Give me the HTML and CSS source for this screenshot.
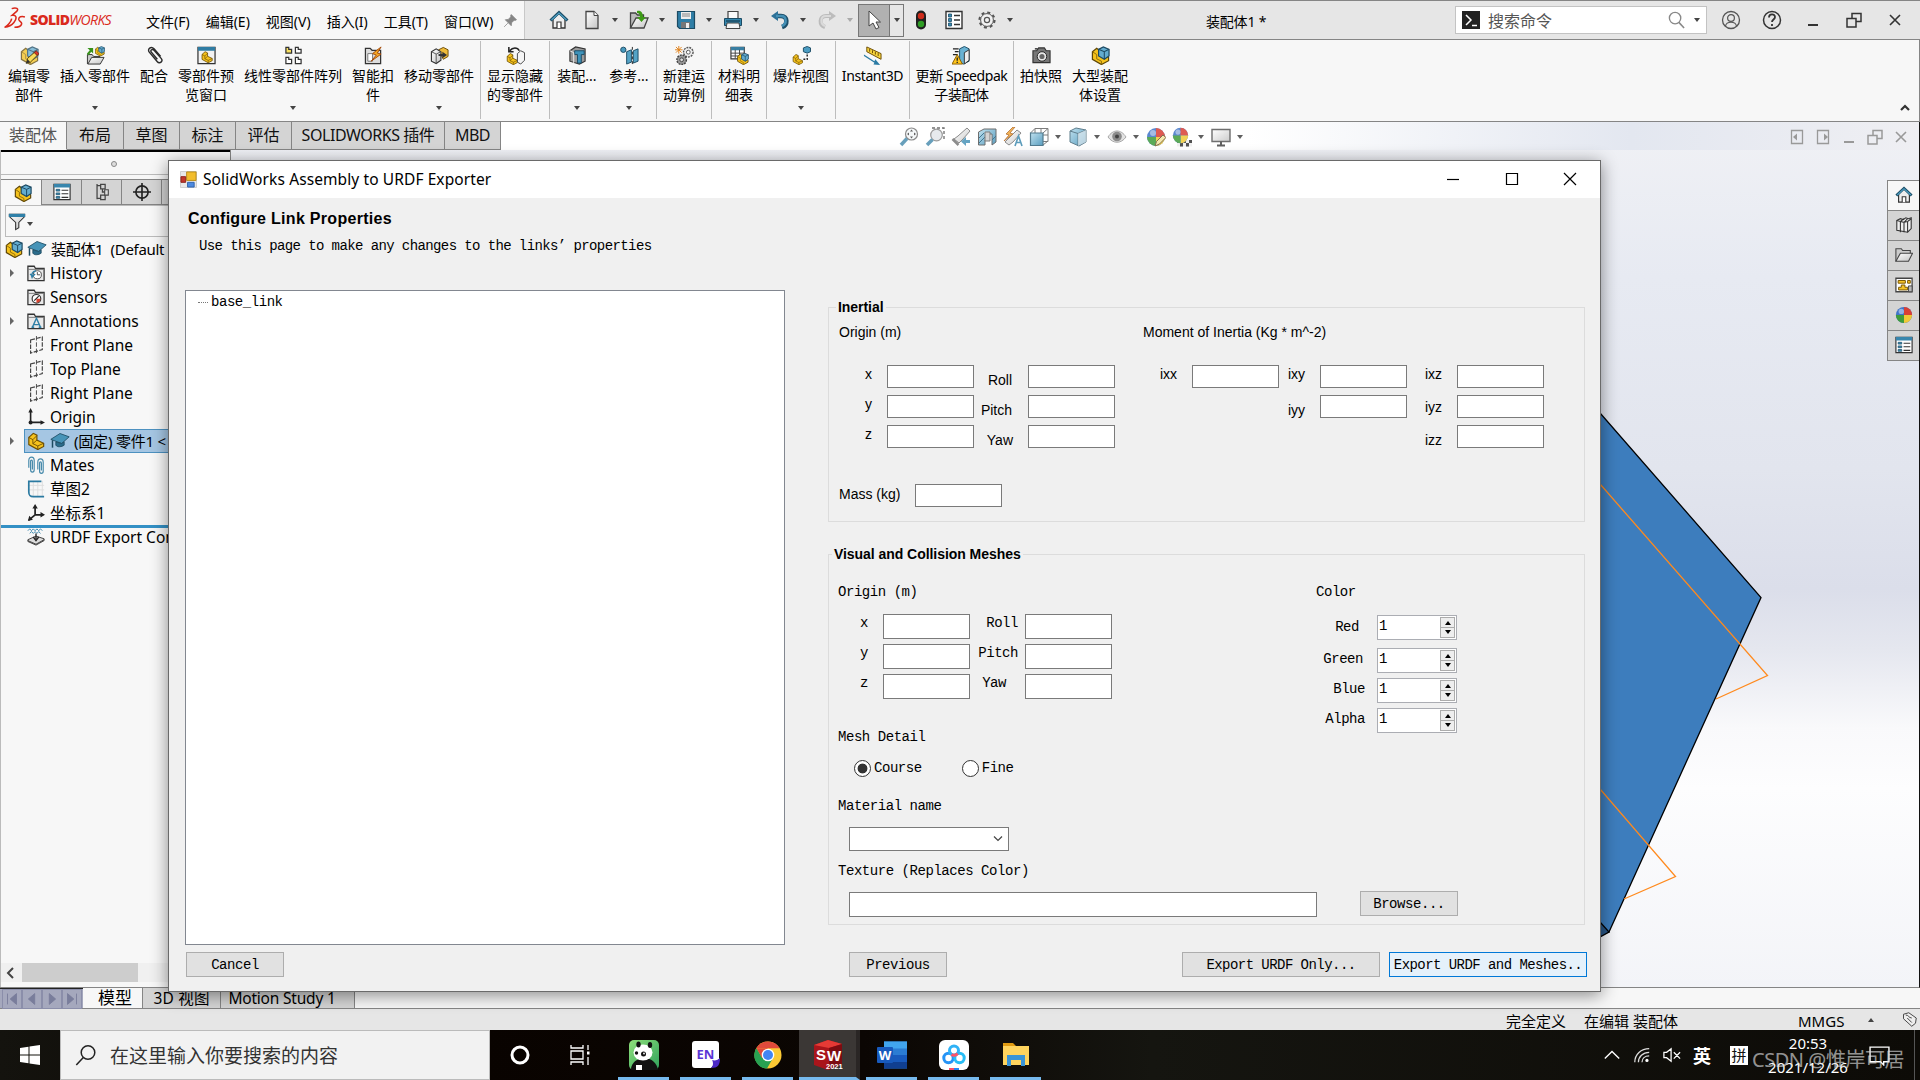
FILE: index.html
```html
<!DOCTYPE html>
<html lang="zh-CN">
<head>
    <meta charset="UTF-8">
    <meta name="viewport" content="width=device-width, initial-scale=1.0">
    <title>SOLIDWORKS - 装配体1</title>
    <link rel="stylesheet" href="styles.css">
</head>
<body>
    <!-- icon sprite -->
    <svg class="sprite" aria-hidden="true">
        <defs>
            <linearGradient id="paper" x1="0" y1="0" x2="1" y2="1"><stop offset="0" stop-color="#fff"/><stop offset="1" stop-color="#c4c4c4"/></linearGradient>
            <linearGradient id="sky" x1="0" y1="0" x2="1" y2="1"><stop offset="0" stop-color="#b5dcec"/><stop offset="1" stop-color="#3d8db5"/></linearGradient>
            <linearGradient id="panda-bg" x1="0" y1="0" x2="1" y2="1"><stop offset="0" stop-color="#8fe07a"/><stop offset="1" stop-color="#2fa15c"/></linearGradient>
        </defs>
        <symbol id="home" viewBox="0 0 20 20"><path d="M4 9v9h12V9l-6-6z" fill="#eee" stroke="#333" stroke-width="1.3"/><path d="M8 18v-6h4v6" fill="#fff" stroke="#333" stroke-width="1.2"/><path d="M1.5 10.5 10 2.5l8.500 8" fill="none" stroke="#1d4f68" stroke-width="3"/><path d="M2.500 10 10 3l7.500 7" fill="none" stroke="#4fa0c4" stroke-width="1.200"/></symbol>
        <symbol id="new" viewBox="0 0 20 20"><path d="M4 1.500h8l4 4v13H4z" fill="url(#paper)" stroke="#444" stroke-width="1.300"/><path d="M12 1.500v4h4" fill="#fff" stroke="#444"/></symbol>
        <symbol id="open" viewBox="0 0 20 20"><path d="M1.500 18V3h5l2 2h6v3" fill="#bbb" stroke="#444" stroke-width="1.300"/><path d="M1.500 18 7 8h12l-4 10z" fill="url(#paper)" stroke="#444" stroke-width="1.300"/><path d="M8 1c4-1 6 2 6 6h3l-4.500 5L8 7h3c0-2-1-4-3-4z" fill="#3d9a16"/></symbol>
        <symbol id="save" viewBox="0 0 20 20"><path d="M1.500 1.500h17v17h-15l-2-2z" fill="#2f7ea6" stroke="#1c4b63" stroke-width="1.200"/><path d="M5 2h10v7H5z" fill="#eee"/><path d="M6 4h8M6 6h8" stroke="#888"/><path d="M5 12h9v6H5z" fill="#777"/><path d="M10 13h3v5h-3z" fill="#eee"/></symbol>
        <symbol id="print" viewBox="0 0 20 20"><path d="M5 1.500h10V9H5z" fill="#fafafa" stroke="#444" stroke-width="1.200"/><path d="M1.500 8.500h17v7h-17z" fill="#3487ae" stroke="#1b4a62"/><path d="M4 13h12l1 5.500H3z" fill="#f5f5f5" stroke="#444"/><path d="M3 11h14" stroke="#1b4a62" stroke-width="1.500"/></symbol>
        <symbol id="undo" viewBox="0 0 20 20"><path d="M5 6h6c7 0 7 9 1 11" fill="none" stroke="#1c4e69" stroke-width="4.500"/><path d="M8 1v10L1 6z" fill="#2c7198"/><path d="M6 6h5c6 0 6 8 1 10" fill="none" stroke="#438fb5" stroke-width="2.500"/></symbol>
        <symbol id="redo" viewBox="0 0 20 20"><path d="M15 6H9c-7 0-7 9-1 11" fill="none" stroke="#bcbcbc" stroke-width="4"/><path d="M12 1v10l7-5z" fill="#bcbcbc"/><path d="M14 6H9c-6 0-6 8-1 10" fill="none" stroke="#dadada" stroke-width="2"/></symbol>
        <symbol id="cursor" viewBox="0 0 20 20"><path d="M5 1v15l4-3 3 6 3-1.500-3-5.500h4.500z" fill="#fff" stroke="#444"/></symbol>
        <symbol id="traffic" viewBox="0 0 20 20"><rect x="5" y="0.500" width="10" height="19" rx="5" fill="#202020"/><circle cx="10" cy="6" r="3.200" fill="#cf2d1c"/><circle cx="10" cy="14" r="3.200" fill="#2f9e25"/></symbol>
        <symbol id="list" viewBox="0 0 20 20"><path d="M2 1.500h16v17H2z" fill="#fff" stroke="#333" stroke-width="1.400"/><path d="M4.500 4h3v3h-3zM4.500 8.500h3v3h-3zM4.500 13h3v3h-3z" fill="#3b8bb1" stroke="#1c4e69" stroke-width=".8"/><path d="M10 5.500h6M10 10h6M10 14.500h6" stroke="#333" stroke-width="1.300"/></symbol>
        <symbol id="gear" viewBox="0 0 20 20"><circle cx="10" cy="10" r="7.500" fill="none" stroke="#555" stroke-width="2.200" stroke-dasharray="3 2.890"/><circle cx="10" cy="10" r="6.400" fill="#f2f2f2" stroke="#555"/><circle cx="10" cy="10" r="2.600" fill="none" stroke="#555" stroke-width="1.200"/></symbol>
        <symbol id="pin" viewBox="0 0 20 20"><path d="M11 2 18 9 16 10 15 9.500 11.500 13 11 17 3 9 7 8.500 10.500 5 10 4zM6.500 13.500 1.500 18.500" fill="#858585" stroke="#858585"/></symbol>

        <symbol id="part" viewBox="0 0 20 20"><path d="M2 6 7 1.500l4 2v5.500l7.500 3.500V16L12 19.500 2 14z" fill="#f5c21c" stroke="#6d4f04" stroke-width="1.300"/><path d="m2 6 4.500 2.500V13l5.500 2.500v4M6.500 8.500 11 4M12 15.500l6.500-3M6.500 13l4.500-4" fill="none" stroke="#6d4f04"/></symbol>
        <symbol id="assembly" viewBox="0 0 20 20"><path d="M1.500 6 6 2.500l4 3 8.500 6.500v3.500L11 19.500 1.500 14z" fill="#f5c21c" stroke="#5e4606" stroke-width="1.300"/><path d="M1.500 6 6 9v4.500l5 2.500v3.500" fill="none" stroke="#8c6a08"/><path d="m8 3.500 5-2.500L19 3.500v7l-5 3.500-6-3.500z" fill="#63acd0" stroke="#1d4a63" stroke-width="1.300"/><path d="m8 3.500 6 2.500 5-2.500M14 6v8" fill="none" stroke="#1d4a63" stroke-width="1.100"/></symbol>
        <symbol id="edit-part" viewBox="0 0 20 20"><use href="#assembly" opacity=".75"/><path d="M7 18 8 13l8-7 3 3-8 8z" fill="#f7dc5b" stroke="#5b4105"/><path d="m15 7 2-2 3 3-2 2z" fill="#d8382a" stroke="#661b14" stroke-width=".8"/><path d="m6 19 2-5 2.500 2.500z" fill="#333"/></symbol>
        <symbol id="insert-part" viewBox="0 0 20 20"><path d="M1.500 19V9h5l1.500 2h7" fill="#c8c8c8" stroke="#333"/><path d="M2 19 6 12h13l-4 7z" fill="url(#paper)" stroke="#333"/><path d="M1.500 2h6v6l-2-2-3 4L1 8l3-3.500z" fill="#37921a"/><svg x="9" y="0" width="11" height="11"><use href="#assembly"/></svg></symbol>
        <symbol id="clip" viewBox="0 0 20 20"><path d="m16.500 11-7-8C6.500 0 2 3 4.500 6.500l8.500 10c2.500 3 6.500-.5 4-3.500L9.500 4.500c-1.800-2-4.300 0-2.800 2L13 14" fill="none" stroke="#2b2b2b" stroke-width="1.500"/></symbol>
        <symbol id="preview" viewBox="0 0 20 20"><path d="M1 1.500h18v17H1z" fill="#f2f2f2" stroke="#333" stroke-width="1.300"/><path d="M1 1h18v4H1z" fill="#2f7ca3"/><svg x="4" y="5" width="13" height="13"><use href="#part"/></svg></symbol>
        <symbol id="pattern" viewBox="0 0 20 20"><path d="M2 1.500h3v2h3v4H2z" fill="#f8e060" stroke="#333" stroke-width="1.300"/><path d="M12 1.500h3v2h3v4h-6zM2 12h3v2h3v4.500H2zM12 12h3v2h3v4.500h-6z" fill="#fff" stroke="#333" stroke-width="1.300"/></symbol>
        <symbol id="smart" viewBox="0 0 20 20"><path d="M1.500 2.500h5l2 2h9v14h-16z" fill="#ddd" stroke="#333" stroke-width="1.300"/><path d="M4 8h5v8H4z" fill="#fff" stroke="#777"/><path d="m18 1-9 7 4 1.500L7.500 16 18 8.500l-4-1z" fill="#f6a823" stroke="#a34a0b"/></symbol>
        <symbol id="move" viewBox="0 0 20 20"><path d="m9 4 5-2.500L19 4v7l-5 3z" fill="#efbb39" stroke="#6b4c05"/><path d="m1.500 6 5-3 5 3v9l-5 3.500-5-2.500z" fill="url(#paper)" stroke="#333" stroke-width="1.200"/><path d="m1.500 6 5 2.500L11.500 6M6.500 8.500v10" fill="none" stroke="#555"/><path d="M9 9.500h5" stroke="#333" stroke-width="2"/><path d="m13 6 5 3.500-5 3.500z" fill="#333"/></symbol>
        <symbol id="show-hide" viewBox="0 0 20 20"><path d="M4 5c3-4 8-4 10 0M3 1v5h5" fill="none" stroke="#222" stroke-width="1.600"/><svg x="0" y="7" width="13" height="13"><use href="#part"/></svg><path d="m12 8 3.500-3 4 2v8l-4 4-3.500-2z" fill="#f5f5f5" stroke="#444"/></symbol>
        <symbol id="feature" viewBox="0 0 20 20"><path d="m2 5 6-4 10 2v13l-6 3L2 16z" fill="#9a9a9a" stroke="#333" stroke-width="1.200"/><path d="M7 5h10v4h-3v9h-4V9H7z" fill="#3f93ba" stroke="#1b4c65"/><path d="M2 5 6 7v11" stroke="#eee" fill="none"/></symbol>
        <symbol id="ref" viewBox="0 0 20 20"><circle cx="3.500" cy="4" r="2.800" fill="#4899be" stroke="#1b4c65"/><path d="m7 6 5-2v13l-5 2zM14 5l5-2v13l-5 2z" fill="#55a3c6" stroke="#1b4c65"/><path d="M13 1v19" stroke="#222" stroke-dasharray="3 2"/></symbol>
        <symbol id="motion" viewBox="0 0 20 20"><circle cx="14" cy="6.500" r="5" fill="#eee" stroke="#555" stroke-width="1.500" stroke-dasharray="2 1"/><circle cx="14" cy="6.500" r="2" fill="#fff" stroke="#555"/><circle cx="7" cy="14.500" r="5" fill="#999" stroke="#444" stroke-width="1.500" stroke-dasharray="2 1"/><circle cx="7" cy="14.500" r="2" fill="#ddd" stroke="#444"/><path d="M4 0v8M0 4h8M1 1l6 6M7 1 1 7" stroke="#e08118"/></symbol>
        <symbol id="bom" viewBox="0 0 20 20"><path d="M1 1.500h14v12H1z" fill="#fff" stroke="#333" stroke-width="1.200"/><path d="M1 1h14v3.500H1z" fill="#397fa3"/><path d="M1 7.500h14M1 10.500h14M5.500 4v9M10 4v9" stroke="#444"/><svg x="7" y="7" width="13" height="13"><use href="#assembly"/></svg></symbol>
        <symbol id="explode" viewBox="0 0 20 20"><svg x="0" y="8" width="12" height="12"><use href="#part"/></svg><path d="m12 2 4-1.500L19.500 2v4L16 7.500 12 6z" fill="#4b9cc2" stroke="#1b4c65"/><path d="M16 9v5h-5" fill="none" stroke="#222" stroke-width="1.500" stroke-dasharray="2 1.500"/></symbol>
        <symbol id="instant" viewBox="0 0 20 20"><path d="M4 1 19 8v6L4 6z" fill="#f6d33b" stroke="#6b4c05"/><path d="M7 3v3M10 4.500v3M13 6v3M16 7.500v3" stroke="#6b4c05"/><path d="m1 9 11 7 1-2 5 6-7-.5 1-2L1 10.500z" fill="#2b7ba4"/></symbol>
        <symbol id="speedpak" viewBox="0 0 20 20"><path d="m8 3 5-2.500L18 3v13l-6 3-4-2z" fill="#69b2d3" stroke="#1b4c65"/><path d="m13 7 5-3v11l-5 4z" fill="#eee" stroke="#333"/><path d="M1 3h6M3 6h4M1 9h5" stroke="#222" stroke-width="1.300"/><path d="m5.500 9 5.500 10H0z" fill="#ffc51b" stroke="#8a5d00"/><path d="M5.500 12v3.500M5.500 16.500V18" stroke="#222" stroke-width="1.400"/></symbol>
        <symbol id="camera" viewBox="0 0 20 20"><path d="M1 5h4l2-3h6l2 3h4v12.500H1z" fill="#777" stroke="#333" stroke-width="1.200"/><circle cx="10.500" cy="11" r="5" fill="#e8e8e8" stroke="#222"/><circle cx="10.500" cy="11" r="2.700" fill="#666"/><path d="M3 3h3" stroke="#333" stroke-width="1.500"/></symbol>

        <symbol id="zoomfit" viewBox="0 0 20 20"><circle cx="12.500" cy="7" r="6" fill="#f4f7f9" stroke="#777" stroke-width="1.200"/><path d="M8 11.500 2 18" stroke="#4d8fb0" stroke-width="3.500"/><path d="m12.500 2.500 1.500 2h-3zM12.500 11.500l1.500-2h-3zM8 7l2-1.500v3zM17 7l-2-1.500v3z" fill="#444"/></symbol>
        <symbol id="zoomarea" viewBox="0 0 20 20"><path d="M7 1h12v12" fill="none" stroke="#555" stroke-width="1.300" stroke-dasharray="3 2"/><circle cx="11.500" cy="8" r="5.800" fill="#e3e7ea" stroke="#888" stroke-width="1.200"/><path d="M7.500 12.500 2 18" stroke="#4d8fb0" stroke-width="3.500"/></symbol>
        <symbol id="prevview" viewBox="0 0 20 20"><path d="m3 12 4-3 9-8 3 3-7 8-4 4z" fill="url(#paper)" stroke="#777"/><path d="m1.500 12 6 6" stroke="#777" stroke-width="2.500"/><path d="M19 13v3h-4v3l-5-4.500 5-4.500v3z" fill="#4a94b8"/></symbol>
        <symbol id="section" viewBox="0 0 20 20"><path d="M1.500 5 7 2h12v13l-4 3V7h-3v6H8v5H1.500z" fill="url(#sky)" stroke="#555"/><path d="m2 11 5-5M2 16l6-6M15 13l4-4" stroke="#22607f"/><path d="M8 5h5v9H8z" fill="#ccc" stroke="#666"/></symbol>
        <symbol id="dynview" viewBox="0 0 20 20"><path d="m2 15 12-12 4 3-8 9-4 3z" fill="url(#paper)" stroke="#777"/><path d="m10 0-7 7 3 1-5 6 9-7-3-1 5-6z" fill="#f3a73a" stroke="#a45a18" stroke-width=".8"/><path d="m12 19 3.500-10L19 19M13 15.500h5" fill="none" stroke="#3f8bb0" stroke-width="1.600"/></symbol>
        <symbol id="orient" viewBox="0 0 20 20"><path d="M6 1.500h13v13M6 1.500v13h13M1.500 6 6 1.500M14 6l5-4.500M14 18l5-4M12 1v13M6 8h13" fill="none" stroke="#666"/><path d="M1.500 6H14v12.500H1.500z" fill="url(#sky)" stroke="#35657c" stroke-width="1.200"/></symbol>
        <symbol id="display" viewBox="0 0 20 20"><path d="m2 4 6-3 10 2v12l-7 4-9-4z" fill="url(#sky)" stroke="#44687a"/><path d="m2 4 8 2.500L18 3M10 6.500V19" fill="none" stroke="#44687a"/><path d="m10 6.500 8-3.500v12l-8 4z" fill="#eef2f4" opacity=".6"/></symbol>
        <symbol id="eye" viewBox="0 0 20 20"><path d="M1 10c5-8 13-8 18 0-5 7-13 7-18 0z" fill="#ddd" stroke="#999"/><circle cx="10" cy="9.500" r="4.800" fill="#777"/><circle cx="10" cy="9.500" r="2" fill="#222"/></symbol>
        <symbol id="ball" viewBox="0 0 20 20"><circle cx="10" cy="10" r="9" fill="#3f74c8"/><path d="M10 1a9 9 0 0 1 9 9h-9z" fill="#d93f35"/><path d="M10 10h9a9 9 0 0 1-9 9z" fill="#f0c937"/><path d="M1 10h9v9a9 9 0 0 1-9-9z" fill="#3f9c3a"/><circle cx="7" cy="6" r="3" fill="#fff" opacity=".45"/></symbol>
        <symbol id="appearance" viewBox="0 0 20 20"><use href="#ball"/><path d="m9 19 1.500-4.500L17 8l3 2.500-6.500 6.500z" fill="#f4e4a0" stroke="#6b5632"/></symbol>
        <symbol id="scene" viewBox="0 0 20 20"><path d="M5 13h15v6.500H5z" fill="#eee"/><path d="M5 13h3v3H5zM11 13h3v3h-3zM17 13h3v3h-3zM8 16h3v3.500H8zM14 16h3v3.500h-3z" fill="#333"/><svg x="0" y="0" width="17" height="17"><use href="#ball"/></svg></symbol>
        <symbol id="monitor" viewBox="0 0 20 20"><path d="M1 2.500h18v12H1z" fill="url(#paper)" stroke="#555" stroke-width="1.400"/><path d="M10 14.500V18M6 18.500h8" stroke="#444" stroke-width="2"/></symbol>

        <symbol id="minimize" viewBox="0 0 20 20"><path d="M5 15h10" stroke="currentColor" stroke-width="2"/></symbol>
        <symbol id="restore" viewBox="0 0 20 20"><path d="M3 8.500h9V17H3zM8 8V3.500h9v8h-5" fill="none" stroke="currentColor" stroke-width="1.500"/></symbol>
        <symbol id="close" viewBox="0 0 20 20"><path d="m5 5 10 10M15 5 5 15" stroke="currentColor" stroke-width="1.600"/></symbol>
        <symbol id="pane-left" viewBox="0 0 20 20"><path d="M4.500 3.500h11v13h-11z" fill="none" stroke="currentColor" stroke-width="1.300"/><path d="M10 6.500v7L6 10z" fill="currentColor"/></symbol>
        <symbol id="pane-right" viewBox="0 0 20 20"><path d="M4.500 3.500h11v13h-11z" fill="none" stroke="currentColor" stroke-width="1.300"/><path d="M11 6.500v7l4-3.500z" fill="currentColor"/></symbol>
        <symbol id="search" viewBox="0 0 20 20"><circle cx="8.500" cy="8" r="6" fill="none" stroke="currentColor" stroke-width="1.400"/><path d="m12.500 12.500 5.500 6" stroke="currentColor" stroke-width="1.600"/></symbol>
        <symbol id="user" viewBox="0 0 20 20"><circle cx="10" cy="10" r="8.500" fill="none" stroke="#555" stroke-width="1.300"/><circle cx="10" cy="8" r="3.400" fill="none" stroke="#555" stroke-width="1.200"/><path d="M4.500 16c1-5 10-5 11 0" fill="none" stroke="#555" stroke-width="1.200"/></symbol>
        <symbol id="help" viewBox="0 0 20 20"><circle cx="10" cy="10" r="8.500" fill="none" stroke="#333" stroke-width="1.500"/><path d="M7 7.500c0-4 6-4 6-.5 0 2.500-3 2.500-3 5M10 14v2" fill="none" stroke="#333" stroke-width="1.800"/></symbol>

        <symbol id="props" viewBox="0 0 20 20"><path d="M1 1.500h18v17H1z" fill="#fff" stroke="#333" stroke-width="1.300"/><path d="M1 1h18v4H1z" fill="#3886ad"/><path d="M3.500 7h4v2h-4zM3.500 11h4v2h-4zM3.500 15h4v2h-4z" fill="#3b8bb1" stroke="#1c4e69" stroke-width=".8"/><path d="M9.500 8H17M9.500 12H17M9.500 16H17" stroke="#333" stroke-width="1.200"/></symbol>
        <symbol id="config" viewBox="0 0 20 20"><path d="M4.500 1v17M4.500 3h4M4.500 17h4M8.500 1.500h5v5h-5zM8.500 13.500h5v5h-5zM10.500 7v3h3" fill="none" stroke="#444" stroke-width="1.400"/><path d="M13 7.500h4v6h-4z" fill="#ddd" stroke="#444" stroke-width="1.200"/></symbol>
        <symbol id="target" viewBox="0 0 20 20"><circle cx="10" cy="10" r="6.800" fill="none" stroke="#222" stroke-width="1.800"/><path d="M10 0v20M0 10h20" stroke="#222" stroke-width="1.800"/></symbol>
        <symbol id="filter" viewBox="0 0 20 20"><path d="M1.500 2h17v2.500L12 11v6l-3.500 2v-8L1.500 4.500z" fill="url(#paper)" stroke="#333" stroke-width="1.200"/><path d="M1 1.500h18v3.500H1z" fill="#2f80a8"/></symbol>
        <symbol id="cap" viewBox="0 0 24 20"><path d="M1 8 12 1l11 4-9 8z" fill="#4794b8" stroke="#1d4a60"/><path d="M7 11v4c2 3 7 2 10 0v-4l-3 2z" fill="#2b6c8c" stroke="#1d4a60"/><path d="M3 9v9" stroke="#1d4a60" stroke-width="1.800"/></symbol>
        <symbol id="folder" viewBox="0 0 20 20"><path d="M1 18.500v-16h7l1.500 2.500H19v13.500z" fill="#e9e9e9" stroke="#333" stroke-width="1.400"/><path d="M1 6h18" stroke="#777"/></symbol>
        <symbol id="history" viewBox="0 0 20 20"><use href="#folder"/><circle cx="11.500" cy="12" r="4.500" fill="#fff" stroke="#444"/><path d="M11.500 9v3h3" fill="none" stroke="#444"/><path d="M6 16c-2-4 0-8 4-8.500M3.500 11 6 14l3-3" fill="none" stroke="#2e7fa6" stroke-width="1.500"/></symbol>
        <symbol id="sensor" viewBox="0 0 20 20"><use href="#folder"/><circle cx="10.500" cy="12" r="4.800" fill="#fff" stroke="#333" stroke-width="1.300"/><path d="M10.500 12h4.500c0 3-2 4.500-4.500 4.500z" fill="#d9402d"/><path d="m8 14 5-5" stroke="#222" stroke-width="1.300"/></symbol>
        <symbol id="annot" viewBox="0 0 20 20"><use href="#folder"/><path d="m6 17 4.500-10L15 17M7.500 14h6M5 17h3M13 17h3" fill="none" stroke="#2e7fa6" stroke-width="1.600"/></symbol>
        <symbol id="plane" viewBox="0 0 20 20"><path d="m4 4.500 13-3.500v14L4 19z" fill="none" stroke="#444" stroke-width="1.300" stroke-dasharray="5 1.500"/><path d="M10.500 0v20" stroke="#444" stroke-dasharray="5 2"/></symbol>
        <symbol id="origin" viewBox="0 0 20 20"><path d="M4 3v13h13" fill="none" stroke="#222" stroke-width="1.800"/><path d="m4 0 2.500 5h-5zM20 16l-5-2.500v5z" fill="#222"/><circle cx="4" cy="16" r="2.200" fill="#222"/></symbol>
        <symbol id="mates" viewBox="0 0 20 20"><path d="M2 13V5c0-5 6-5 6 0v10c0 4-4 4-4 0V6c0-2 2-2 2 0v9M12 15V7c0-5 6-5 6 0v10c0 3-4 3-4 0V8c0-2 2-2 2 0v8" fill="none" stroke="#4689aa" stroke-width="1.300"/></symbol>
        <symbol id="sketch" viewBox="0 0 20 20"><path d="M7 1v18M12 1v18M17 1v18M1 6h18M1 11h18" stroke="#ddd"/><path d="M16 1.500H2V13c0 4 1 5.500 5 5.500h12" fill="none" stroke="#2b7aa1" stroke-width="1.900"/></symbol>
        <symbol id="csys" viewBox="0 0 20 20"><path d="M9 3v9h9M9 12l-7 6" fill="none" stroke="#222" stroke-width="1.900"/><path d="m9 0 3 5H6zM20 12l-5-3v6zM1 19l1.500-6 4 4.500z" fill="#222"/></symbol>
        <symbol id="urdf" viewBox="0 0 20 20"><path d="m1 3 2-2 2 2 2-2 2 2 2-2 2 2 2-2 2 2M3 6l2-2 2 2 2-2 2 2 2-2 2 2" fill="none" stroke="#2e7fa6"/><path d="m1 13 9-4 9 3v2l-9 5-9-4z" fill="#ddd" stroke="#333"/><path d="m1 14 9 4 9-5" fill="none" stroke="#333"/><path d="M10 6v6M7 10l3 4 3-4" fill="none" stroke="#222" stroke-width="1.500"/></symbol>
        <symbol id="library" viewBox="0 0 20 20"><path d="m2 5 4-2 3 1 3-2 3 1 3-1v12l-4 4-12-2z" fill="#eee" stroke="#333" stroke-width="1.200"/><path d="m2 5 4 1 4-3M6 6v12M6 6l4 1 4-4M10 7v11M14 6v12M10 7l4-1 4-3" fill="none" stroke="#333" stroke-width="1.200"/></symbol>
        <symbol id="folder-open" viewBox="0 0 20 20"><path d="M1 17V3h6l1.500 2H17v3" fill="#ccc" stroke="#444" stroke-width="1.200"/><path d="M1 17 6 8h13.500L15 17z" fill="url(#paper)" stroke="#444" stroke-width="1.200"/></symbol>
        <symbol id="palette" viewBox="0 0 20 20"><path d="M1 2.500h18v15H1z" fill="#fff" stroke="#444" stroke-width="1.400"/><path d="M3.500 5h8v3h-8zM14 5h3v3h-3zM7 10h4v2.500h3v3H4v-3h3z" fill="#f5c326" stroke="#7c5a05" stroke-width="1.100"/><path d="M15 11h4v6.500h-4z" fill="#bbb" stroke="#444"/></symbol>
        <symbol id="tag" viewBox="0 0 20 20"><path d="m2 3 7-2 10 7-1 7-5 4L2 9z" fill="#eee" stroke="#444" stroke-width="1.300"/><path d="M5 4c4 0 4 4 8 4M7 8l6 6" stroke="#444" fill="none" stroke-width="1.300"/></symbol>
    </svg>

    <div class="app">
        <header class="titlebar">
            <div class="brand-area">
                <div class="brand">
                    <svg class="ds" viewBox="0 0 40 40"><path d="M14 3c8-3 14 0 9 5l-8 7c8-1 9 6 3 13-4 5-10 8-17 9 5-2 12-10 13-16M38 18c-6-2-12 0-11 5 1 4 6 4 5 8s-6 6-13 6" fill="none" stroke="#da291c" stroke-width="2.800"/></svg>
                    <span class="logo"><b>SOLID</b>WORKS</span>
                </div>
                <nav class="menu">
                    <span>文件(F)</span><span>编辑(E)</span><span>视图(V)</span><span>插入(I)</span><span>工具(T)</span><span>窗口(W)</span>
                </nav>
                <svg class="pin"><use href="#pin"/></svg>
            </div>
            <div class="quick">
                <svg class="ic"><use href="#home"/></svg>
                <svg class="ic"><use href="#new"/></svg><i class="caret"></i>
                <svg class="ic"><use href="#open"/></svg><i class="caret"></i>
                <svg class="ic"><use href="#save"/></svg><i class="caret"></i>
                <svg class="ic"><use href="#print"/></svg><i class="caret"></i>
                <svg class="ic"><use href="#undo"/></svg><i class="caret"></i>
                <svg class="ic"><use href="#redo"/></svg><i class="caret light"></i>
                <div class="select-tool"><svg class="ic"><use href="#cursor"/></svg></div>
                <div class="select-more"><i class="caret"></i></div>
                <svg class="ic"><use href="#traffic"/></svg>
                <svg class="ic"><use href="#list"/></svg>
                <svg class="ic"><use href="#gear"/></svg><i class="caret"></i>
            </div>
            <div class="doc-name">装配体1 *</div>
            <div class="command-search">
                <svg class="prompt" viewBox="0 0 18 18"><path d="M0 0h18v18H0z" fill="#222"/><path d="m4 4 5 5-5 5M10 14.500h5" fill="none" stroke="#fff" stroke-width="1.500"/></svg>
                <span>搜索命令</span>
                <svg class="ic"><use href="#search"/></svg><i class="caret"></i>
            </div>
            <div class="win-buttons">
                <svg class="ic"><use href="#user"/></svg>
                <svg class="ic"><use href="#help"/></svg>
                <svg class="ic"><use href="#minimize"/></svg>
                <svg class="ic"><use href="#restore"/></svg>
                <svg class="ic"><use href="#close"/></svg>
            </div>
        </header>

        <div class="ribbon">
            <div class="group">
                <div class="tool"><svg><use href="#edit-part"/></svg><span>编辑零<br>部件</span></div>
                <div class="tool"><svg><use href="#insert-part"/></svg><span>插入零部件</span><i class="caret"></i></div>
                <div class="tool"><svg><use href="#clip"/></svg><span>配合</span></div>
                <div class="tool"><svg><use href="#preview"/></svg><span>零部件预<br>览窗口</span></div>
                <div class="tool"><svg><use href="#pattern"/></svg><span>线性零部件阵列</span><i class="caret"></i></div>
                <div class="tool"><svg><use href="#smart"/></svg><span>智能扣<br>件</span></div>
                <div class="tool"><svg><use href="#move"/></svg><span>移动零部件</span><i class="caret"></i></div>
            </div>
            <div class="group"><div class="tool"><svg><use href="#show-hide"/></svg><span>显示隐藏<br>的零部件</span></div></div>
            <div class="group">
                <div class="tool short"><svg><use href="#feature"/></svg><span>装配...</span><i class="caret"></i></div>
                <div class="tool short"><svg><use href="#ref"/></svg><span>参考...</span><i class="caret"></i></div>
            </div>
            <div class="group"><div class="tool"><svg><use href="#motion"/></svg><span>新建运<br>动算例</span></div></div>
            <div class="group"><div class="tool"><svg><use href="#bom"/></svg><span>材料明<br>细表</span></div></div>
            <div class="group"><div class="tool"><svg><use href="#explode"/></svg><span>爆炸视图</span><i class="caret"></i></div></div>
            <div class="group"><div class="tool instant"><svg><use href="#instant"/></svg><span>Instant3D</span></div></div>
            <div class="group"><div class="tool speedpak"><svg><use href="#speedpak"/></svg><span>更新 Speedpak<br>子装配体</span></div></div>
            <div class="group">
                <div class="tool"><svg><use href="#camera"/></svg><span>拍快照</span></div>
                <div class="tool"><svg><use href="#assembly"/></svg><span>大型装配<br>体设置</span></div>
            </div>
            <svg class="collapse" viewBox="0 0 12 8"><path d="m2 7 4-4 4 4" fill="none" stroke="#333" stroke-width="2.200"/></svg>
        </div>

        <main class="workspace">
            <div class="view-bar">
                <div class="tabs">
                    <span class="active">装配体</span><span>布局</span><span>草图</span><span>标注</span><span>评估</span><span class="plugins">SOLIDWORKS 插件</span><span class="mbd">MBD</span>
                </div>
                <div class="heads-up">
                    <svg class="ic"><use href="#zoomfit"/></svg>
                    <svg class="ic"><use href="#zoomarea"/></svg>
                    <svg class="ic"><use href="#prevview"/></svg>
                    <svg class="ic"><use href="#section"/></svg>
                    <svg class="ic"><use href="#dynview"/></svg>
                    <svg class="ic"><use href="#orient"/></svg><i class="caret"></i>
                    <svg class="ic"><use href="#display"/></svg><i class="caret"></i>
                    <svg class="ic"><use href="#eye"/></svg><i class="caret"></i>
                    <svg class="ic"><use href="#appearance"/></svg>
                    <svg class="ic"><use href="#scene"/></svg><i class="caret"></i>
                    <svg class="ic"><use href="#monitor"/></svg><i class="caret"></i>
                </div>
                <div class="doc-buttons">
                    <svg class="ic"><use href="#pane-left"/></svg>
                    <svg class="ic"><use href="#pane-right"/></svg>
                    <svg class="ic"><use href="#minimize"/></svg>
                    <svg class="ic"><use href="#restore"/></svg>
                    <svg class="ic"><use href="#close"/></svg>
                </div>
            </div>
            <div class="work-area">
                <aside class="feature-panel">
                    <div class="splitter"><i></i></div>
                    <div class="panel-tabs">
                        <span class="active"><svg><use href="#assembly"/></svg></span>
                        <span><svg><use href="#props"/></svg></span>
                        <span><svg><use href="#config"/></svg></span>
                        <span><svg><use href="#target"/></svg></span>
                        <span></span>
                    </div>
                    <div class="filter"><svg><use href="#filter"/></svg><i class="caret"></i></div>
                    <ul class="tree">
                        <li class="root"><svg><use href="#assembly"/></svg><svg class="cap"><use href="#cap"/></svg>装配体1&nbsp; (Default</li>
                        <li class="more"><svg><use href="#history"/></svg>History</li>
                        <li><svg><use href="#sensor"/></svg>Sensors</li>
                        <li class="more"><svg><use href="#annot"/></svg>Annotations</li>
                        <li><svg><use href="#plane"/></svg>Front Plane</li>
                        <li><svg><use href="#plane"/></svg>Top Plane</li>
                        <li><svg><use href="#plane"/></svg>Right Plane</li>
                        <li><svg><use href="#origin"/></svg>Origin</li>
                        <li class="more selected"><svg><use href="#part"/></svg><svg class="cap"><use href="#cap"/></svg>(固定) 零件1 &lt;</li>
                        <li><svg><use href="#mates"/></svg>Mates</li>
                        <li><svg><use href="#sketch"/></svg>草图2</li>
                        <li><svg><use href="#csys"/></svg>坐标系1</li>
                        <li class="after-bar"><svg><use href="#urdf"/></svg>URDF Export Con</li>
                    </ul>
                    <div class="h-scroll"><svg viewBox="0 0 10 12"><path d="M8 1 3 6l5 5" fill="none" stroke="#444" stroke-width="2"/></svg><i></i></div>
                </aside>
                <div class="viewport">
                    <svg class="model" viewBox="0 0 320 838">
                        <path d="m0 263 161 184.500L9 782-8 787V254z" fill="#3d7dbd" stroke="#000" stroke-width="1.300"/>
                        <path d="m0 772 9 10-9 5z" fill="#2a5788" stroke="#000" stroke-width="1.300"/>
                        <path d="m0 334 167.500 191.500L116 549M0 639l75.500 87.500L24 749" fill="none" stroke="#ff8a1e" stroke-width="1.300"/>
                    </svg>
                </div>
                <div class="task-pane">
                    <span class="active"><svg><use href="#home"/></svg></span>
                    <span><svg><use href="#library"/></svg></span>
                    <span><svg><use href="#folder-open"/></svg></span>
                    <span><svg><use href="#palette"/></svg></span>
                    <span><svg><use href="#ball"/></svg></span>
                    <span><svg><use href="#props"/></svg></span>
                </div>
            </div>
        </main>

        <div class="model-tabs">
            <div class="nav">
                <svg viewBox="0 0 20 20"><path d="M5 4v12M15 4v12l-7-6z"/></svg>
                <svg viewBox="0 0 20 20"><path d="M13 4v12l-7-6z"/></svg>
                <svg viewBox="0 0 20 20"><path d="M7 4v12l7-6z"/></svg>
                <svg viewBox="0 0 20 20"><path d="M15 4v12M5 4v12l7-6z"/></svg>
            </div>
            <span class="active">模型</span><span class="view3d">3D 视图</span><span class="study">Motion Study 1</span>
        </div>
        <footer class="status">
            <span class="defined">完全定义</span><span class="editing">在编辑 装配体</span><span class="units">MMGS</span><i class="caret up"></i>
            <svg><use href="#tag"/></svg>
        </footer>

        <div class="taskbar">
            <div class="start"><svg viewBox="0 0 20 20"><path d="m0 3 8.500-1.200v7.700H0zM9.500 1.600 20 0v9.500H9.500zM0 10.500h8.500v7.700L0 17zM9.500 10.500H20V20L9.500 18.400z" fill="#fff"/></svg></div>
            <div class="search-box"><svg viewBox="0 0 22 22"><circle cx="13" cy="8.500" r="6.800" fill="none" stroke="#222" stroke-width="1.500"/><path d="m8.300 13.500-7 7.500" stroke="#222" stroke-width="1.500"/></svg><span>在这里输入你要搜索的内容</span></div>
            <div class="sys"><svg viewBox="0 0 20 20"><circle cx="10" cy="10" r="8" fill="none" stroke="#fff" stroke-width="3"/></svg></div>
            <div class="sys"><svg viewBox="0 0 20 20"><path d="M1 0v3h12V0M1 20v-3h12v3M1 6h12v8H1zM18 0v5M18 12v8" fill="none" stroke="#fff" stroke-width="1.300"/><path d="M17 6.500h2.500v3H17z" fill="#fff"/></svg></div>
            <div class="apps">
                <div class="task"><svg viewBox="0 0 30 30"><rect width="30" height="30" rx="5" fill="url(#panda-bg)"/><path d="M2 30c0-6 4-10 9-11 8-3 17 2 18 11z" fill="#111"/><ellipse cx="14" cy="12.500" rx="9.500" ry="8" fill="#fff"/><ellipse cx="9.500" cy="4.500" rx="2.200" ry="3" fill="#111"/><ellipse cx="21" cy="5" rx="2.200" ry="3" fill="#111"/><circle cx="7.500" cy="13" r="1.700" fill="#111"/><circle cx="14.500" cy="14" r="2.500" fill="#111"/><circle cx="15" cy="13.500" r=".9" fill="#fff"/><path d="M7 25h6v5H7z" fill="#fff"/></svg></div>
                <div class="task"><svg viewBox="0 0 30 30"><path d="M4 1h21q3 0 3 3v15l-8 9H4q-3 0-3-3V4q0-3 3-3z" fill="#fff"/><path d="M20 28c3-2 2-7 1-8 3 1 6 0 8-2 0 7-2 10-9 10z" fill="#4b28c5"/><text x="14.500" y="19" text-anchor="middle" class="en">EN</text></svg></div>
                <div class="task"><svg viewBox="0 0 30 30"><circle cx="15" cy="15" r="13.500" fill="#fcc934"/><path d="M3.300 8.300A13.500 13.500 0 0 1 26.700 8.300H15z" fill="#e04a3b"/><path d="M3.300 8.300A13.500 13.500 0 0 0 14 28.500l6-10.500H9z" fill="#28a152"/><path d="m3.300 8.300 5.900 10L15 8.300z" fill="#e04a3b"/><path d="m3.300 8.300 5.800 10.200 4 3.500-3 6A13.500 13.500 0 0 1 3.300 8.300z" fill="#28a152"/><circle cx="15" cy="15" r="6.300" fill="#fff"/><circle cx="15" cy="15" r="5" fill="#4285f4"/></svg></div>
                <div class="task current"><svg viewBox="0 0 30 30"><path d="m1 5 14-5 14 4v20L15 30 1 25z" fill="#a9151b"/><path d="m1 5 14-5 14 4-13 4z" fill="#e53a35"/><path d="m16 8 13-4v20l-13 6z" fill="#7c0c11"/><text x="3" y="20" class="sw">S</text><text x="14" y="21" class="sw">W</text><text x="13" y="29" class="year">2021</text></svg></div>
                <div class="task"><svg viewBox="0 0 30 30"><path d="M7 1.500h23v27H7z" fill="#2b7cd3"/><path d="M7 1.500h23v7H7z" fill="#41a5ee"/><path d="M7 15h23v7H7z" fill="#185abd"/><path d="M7 22h23v6.500H7z" fill="#103f91"/><rect y="7" width="16" height="16" rx="1" fill="#185abd"/><text x="8" y="20" text-anchor="middle" class="word">W</text></svg></div>
                <div class="task"><svg viewBox="0 0 30 30"><rect width="30" height="30" rx="6" fill="#fff"/><circle cx="9.500" cy="18" r="4.700" fill="none" stroke="#2593f6" stroke-width="3"/><circle cx="20.500" cy="18" r="4.700" fill="none" stroke="#28bdf5" stroke-width="3"/><circle cx="15" cy="10.500" r="4.500" fill="none" stroke="#2fb2f6" stroke-width="3"/><path d="M12.500 14.500a4.500 4.500 0 0 0 6-1" fill="none" stroke="#ff5368" stroke-width="3"/><path d="M10 28h5v2h-5z" fill="#ff4d67"/><path d="M15 28h5v2h-5z" fill="#2987f4"/></svg></div>
                <div class="task"><svg viewBox="0 0 30 30"><path d="M2 3h10l3 3H2z" fill="#e09b12"/><path d="M2 6h26v19H2z" fill="#ffd45e"/><path d="M6 26V15h18v11h-4v-6H10v6z" fill="#3a94d6"/></svg></div>
            </div>
            <div class="tray">
                <svg viewBox="0 0 20 20"><path d="m2 14 8-8 8 8" fill="none" stroke="#fff" stroke-width="1.500"/></svg>
                <svg viewBox="0 0 20 20"><path d="M2 18C2 9 9 3 18 3M6 18c0-6 5-11 12-11M10 18c0-4 3-7 8-7" fill="none" stroke="#ddd" stroke-width="1.400"/><circle cx="15.500" cy="16" r="1.800" fill="#fff"/></svg>
                <svg viewBox="0 0 20 20"><path d="M1 7h3l5-4v14l-5-4H1zM12 7l7 7M19 7l-7 7" fill="none" stroke="#fff" stroke-width="1.400"/></svg>
                <span class="lang">英</span>
                <span class="ime">拼</span>
                <div class="clock"><span>20:53</span><span>2021/12/26</span></div>
                <svg class="notice" viewBox="0 0 20 20"><path d="M1 2h18v14h-5v3l-3-3H1z" fill="none" stroke="#fff" stroke-width="1.300"/></svg>
            </div>
            <i class="peek"></i>
        </div>
    </div>

    <section class="dialog">
        <div class="dialog-title">
            <svg class="form-icon" viewBox="0 0 18 18"><path d="M.5.5h17v17H.5z" fill="#e8e8e8" stroke="#ccc"/><path d="M7 1h10v9H7z" fill="#f2bd2c" stroke="#b98b16"/><path d="M1 6h5v6H1z" fill="#c1362b" stroke="#8d231b"/><path d="M8 12h7v5H8z" fill="#4d8ae0" stroke="#2f62aa"/></svg>
            <h1>SolidWorks Assembly to URDF Exporter</h1>
            <svg class="ctl" viewBox="0 0 14 14"><path d="M1 7.500h12" stroke="#000" stroke-width="1.200"/></svg>
            <svg class="ctl" viewBox="0 0 14 14"><path d="M1.500 1.500h11v11h-11z" fill="none" stroke="#000" stroke-width="1.200"/></svg>
            <svg class="ctl" viewBox="0 0 14 14"><path d="m1 1 12 12M13 1 1 13" stroke="#000" stroke-width="1.200"/></svg>
        </div>
        <div class="dialog-body">
            <h2>Configure Link Properties</h2>
            <p>Use this page to make any changes to the links’ properties</p>
            <div class="columns">
                <div class="link-tree"><i></i>base_link</div>
                <div class="props">
                    <fieldset class="inertial">
                        <legend>Inertial</legend>
                        <div class="headings"><span>Origin (m)</span><span>Moment of Inertia (Kg * m^-2)</span></div>
                        <div class="matrix">
                            <label>x</label><input><label class="low">Roll</label><input><label>ixx</label><input><label>ixy</label><input><label>ixz</label><input>
                            <label>y</label><input><label class="low">Pitch</label><input><b></b><b></b><label class="low">iyy</label><input><label class="mid">iyz</label><input>
                            <label>z</label><input><label class="low">Yaw</label><input><b></b><b></b><b></b><b></b><label class="low">izz</label><input>
                        </div>
                        <div class="mass"><label>Mass (kg)</label><input></div>
                    </fieldset>
                    <fieldset class="meshes">
                        <legend>Visual and Collision Meshes</legend>
                        <div class="mesh-top">
                            <div class="mesh-left">
                                <div class="line">Origin (m)</div>
                                <div class="pose">
                                    <label>x</label><input><label class="rot">Roll</label><input>
                                    <label>y</label><input><label class="rot">Pitch</label><input>
                                    <label>z</label><input><label class="rot yaw">Yaw</label><input>
                                </div>
                                <div class="line detail">Mesh Detail</div>
                                <div class="radios">
                                    <label><i class="radio on"></i>Course</label><label><i class="radio"></i>Fine</label>
                                </div>
                                <div class="line material">Material name</div>
                                <div class="combo"><svg viewBox="0 0 10 8"><path d="m1 1.500 4 4 4-4" fill="none" stroke="#444" stroke-width="1.200"/></svg></div>
                            </div>
                            <div class="color">
                                <div class="line">Color</div>
                                <div class="channel red"><label>Red</label><div class="spin"><span>1</span><b><i class="caret up"></i><i class="caret"></i></b></div></div>
                                <div class="channel green"><label>Green</label><div class="spin"><span>1</span><b><i class="caret up"></i><i class="caret"></i></b></div></div>
                                <div class="channel"><label>Blue</label><div class="spin"><span>1</span><b><i class="caret up"></i><i class="caret"></i></b></div></div>
                                <div class="channel"><label>Alpha</label><div class="spin"><span>1</span><b><i class="caret up"></i><i class="caret"></i></b></div></div>
                            </div>
                        </div>
                        <div class="line texture">Texture (Replaces Color)</div>
                        <div class="texture-row"><input><button>Browse...</button></div>
                    </fieldset>
                </div>
            </div>
            <div class="dialog-footer">
                <button>Cancel</button>
                <button class="previous">Previous</button>
                <button class="export">Export URDF Only...</button>
                <button class="export primary">Export URDF and Meshes..</button>
            </div>
        </div>
    </section>

    <div class="watermark">CSDN @惟岸可居</div>
</body>
</html>
```

FILE: styles.css
```css
* {
    box-sizing: border-box;
}
body {
    margin: 0;
    width: 1920px;
    height: 1080px;
    overflow: hidden;
    position: relative;
    font-family: "Noto Sans", "Noto Sans CJK SC", sans-serif;
    font-size: 14px;
    color: #000;
}
svg {
    display: block;
    flex: none;
}
.sprite {
    position: absolute;
    width: 0;
    height: 0;
}
.app {
    display: flex;
    flex-direction: column;
    height: 1080px;
    background-color: #f7f7f7;
}
.ic {
    width: 20px;
    height: 20px;
}
.caret {
    flex: none;
    width: 0;
    height: 0;
    border: 3px solid transparent;
    border-top: 4px solid #444;
    border-bottom: 0;
}
.caret.up {
    border-top: 0;
    border-bottom: 4px solid #444;
}
.caret.light {
    border-top-color: #aaa;
}

/* title bar */
.titlebar {
    display: flex;
    align-items: center;
    height: 40px;
    border-top: 1px solid #858585;
    border-bottom: 1px solid #858585;
    background-color: #e6e6e6;
}
.brand-area {
    display: flex;
    align-items: center;
    width: 525px;
    height: 38px;
    background-color: #f7f7f7;
    border-right: 1px solid #c8c8c8;
}
.brand {
    display: flex;
    align-items: center;
    width: 146px;
    padding-left: 4px;
}
.ds {
    width: 22px;
    height: 22px;
    margin-top: -5px;
}
.logo {
    margin-left: 4px;
    font: italic 14px/20px "Open Sans", sans-serif;
    letter-spacing: -0.65px;
    color: #da291c;
}
.logo b {
    font-style: normal;
    font-weight: 800;
}
.menu {
    display: flex;
    gap: 16px;
    padding-top: 3px;
    line-height: 20px;
    width: 357px;
    white-space: nowrap;
}
.pin {
    width: 15px;
    height: 15px;
}
.quick {
    display: flex;
    align-items: center;
    padding-left: 24px;
    width: 681px;
}
.quick .ic + .ic {
    margin-left: 13px;
}
.quick .caret {
    margin-left: 10px;
    margin-right: 11px;
}
.select-tool, .select-more {
    display: flex;
    align-items: center;
    justify-content: center;
    width: 32px;
    height: 33px;
    background-color: #b1b1b1;
    border: 1px solid #777;
}
.quick .light {
    margin-right: 5px;
}
.select-more {
    width: 14px;
    border-left: 0;
    background: none;
}
.quick .select-more .caret {
    margin: 0;
}
.select-more + .ic {
    margin-left: 7px;
}
.doc-name {
    width: 249px;
    padding-top: 1px;
    letter-spacing: -0.2px;
}
.command-search {
    display: flex;
    align-items: center;
    width: 252px;
    height: 28px;
    padding: 0 6px;
    background-color: #fff;
    border: 1px solid #c3c3c3;
    color: #555;
    font-size: 16px;
}
.command-search span {
    margin: 0 auto 0 8px;
}
.command-search .ic {
    width: 19px;
    color: #888;
}
.command-search .caret {
    margin-left: 8px;
}
.prompt {
    width: 18px;
    height: 18px;
}
.win-buttons {
    display: flex;
    gap: 21px;
    margin-left: 14px;
    color: #333;
}

/* ribbon */
.ribbon {
    display: flex;
    align-items: flex-start;
    height: 82px;
    padding-top: 1px;
    border-bottom: 1px solid #858585;
    border-right: 1px solid #858585;
}
.group {
    display: flex;
    flex: none;
    height: 78px;
    padding: 5px 1px 0;
    border-right: 1px solid #bdbdbd;
}
.group:first-child {
    padding-left: 3px;
}
.group:nth-child(9) {
    border-right: 0;
}
.tool {
    display: flex;
    flex-direction: column;
    flex: none;
    align-items: center;
    padding: 0 5px;
    height: 68px;
    text-align: center;
    line-height: 19px;
    white-space: nowrap;
}
.tool svg {
    width: 19px;
    height: 19px;
    margin-bottom: 1px;
}
.tool .caret {
    margin-top: auto;
    margin-bottom: 4px;
}
.short {
    width: 52px;
    padding: 0;
}
.instant {
    width: 71px;
    letter-spacing: -0.4px;
}
.speedpak {
    width: 101px;
    letter-spacing: -0.4px;
}
.collapse {
    width: 12px;
    height: 8px;
    margin: 62px 8px 0 auto;
}

/* drawing area */
.workspace {
    display: flex;
    flex-direction: column;
    height: 866px;
    background: linear-gradient(180deg, #f0f1f5 0%, #e7eaf2 18%, #e2e5ee 40%, #dbdeea 54%, #e5e7ef 61%, #f9f9fb 70%, #fdfdfe 77%, #f3f4f8 100%);
    border-right: 1px solid #111;
    border-bottom: 1px solid #858585;
}
.view-bar {
    display: flex;
    height: 28px;
    background: linear-gradient(90deg, #fff 65%, #e3e7f0 85%, #efeff3 100%);
}
.tabs {
    display: flex;
    width: 899px;
    font-size: 16px;
    line-height: 27px;
    color: #111;
}
.tabs span {
    width: 57px;
    height: 28px;
    text-align: center;
    background-color: #d4d4d4;
    border-right: 1px solid #858585;
    border-bottom: 1px solid #858585;
}
.tabs span:nth-child(n+3) {
    width: 56px;
}
.tabs .active {
    width: 67px;
    color: #555;
    background-color: #f7f7f7;
    border-bottom-color: #f7f7f7;
}
.tabs span.plugins {
    width: 153px;
    letter-spacing: -0.45px;
}
.tabs .mbd {
    letter-spacing: -0.5px;
}
.heads-up {
    display: flex;
    align-items: center;
    width: 888px;
    gap: 6px;
    padding-top: 2px;
    opacity: 0.85;
}
.heads-up .caret {
    margin: 0 1px 0 0;
}
.doc-buttons {
    display: flex;
    align-items: center;
    gap: 6px;
    padding-top: 2px;
    color: #999;
}
.work-area {
    display: flex;
    height: 837px;
}
.feature-panel {
    display: flex;
    flex-direction: column;
    width: 231px;
    background-color: #f7f7f7;
    border-left: 1px solid #bbb;
    border-right: 1px solid #858585;
}
.splitter {
    height: 25px;
    border-top: 2px solid #000;
    border-bottom: 1px solid #bbb;
}
.splitter i {
    display: block;
    width: 6px;
    height: 6px;
    margin: 9px 0 0 110px;
    border: 1px solid #888;
    border-radius: 50%;
    background-color: #ddd;
}
.panel-tabs {
    display: flex;
    height: 26px;
    margin-top: 4px;
}
.panel-tabs span {
    display: flex;
    align-items: center;
    justify-content: center;
    width: 40px;
    background-color: #d4d4d4;
    border: 1px solid #858585;
    border-left: 0;
}
.panel-tabs .active {
    width: 41px;
    padding-left: 3px;
    background-color: #f7f7f7;
    border-bottom: 0;
}
.panel-tabs span:last-child {
    width: 68px;
}
.panel-tabs svg {
    width: 18px;
    height: 18px;
}
.filter {
    display: flex;
    align-items: center;
    height: 32px;
    margin-left: 4px;
    padding-left: 2px;
    border: 1px solid #bbb;
}
.filter svg {
    width: 18px;
    height: 19px;
}
.filter .caret {
    margin: 6px 0 0 1px;
}
.tree {
    margin: 0;
    padding: 0;
    list-style: none;
    font-size: 15.5px;
    white-space: nowrap;
    overflow: hidden;
}
.tree li {
    display: flex;
    align-items: center;
    height: 24px;
    padding-left: 26px;
    line-height: 24px;
}
.tree svg {
    width: 18px;
    height: 18px;
    margin-right: 5px;
}
.tree .root {
    padding-left: 4px;
    font-size: 15px;
    letter-spacing: -0.3px;
}
.tree .root svg {
    margin-right: 4px;
}
.tree .cap, .tree .root .cap {
    width: 20px;
    margin-right: 4px;
}
.tree .more::before {
    content: "";
    margin-left: -17px;
    margin-right: 13px;
    border: 4px solid transparent;
    border-left: 4px solid #666;
    border-right: 0;
}
.tree .selected {
    font-size: 15px;
    letter-spacing: -0.2px;
    background: linear-gradient(#4d91c0, #4d91c0) 23px 0 / 100% 1px no-repeat, linear-gradient(#4d91c0, #4d91c0) 23px 100% / 100% 1px no-repeat, linear-gradient(#4d91c0, #4d91c0) 23px 0 / 1px 100% no-repeat, linear-gradient(#a5c6e3, #a5c6e3) 23px 0 no-repeat;
}
.tree .after-bar {
    box-shadow: inset 0 3px #3390c5;
}
.h-scroll {
    display: flex;
    align-items: center;
    height: 19px;
    margin-top: auto;
    margin-bottom: 5px;
    background-color: #f0f0f0;
}
.h-scroll svg {
    width: 10px;
    height: 12px;
    margin: 0 7px 0 4px;
}
.h-scroll i {
    width: 116px;
    height: 19px;
    background-color: #cdcdcd;
}
.viewport {
    display: flex;
    justify-content: flex-end;
    width: 1656px;
}
.model {
    width: 320px;
    height: 838px;
    margin-right: -33px;
}
.task-pane {
    width: 32px;
    height: 181px;
    margin-top: 30px;
    border: 1px solid #858585;
    border-right: 0;
    position: relative;
}
.task-pane span {
    display: flex;
    align-items: center;
    justify-content: center;
    height: 30px;
    padding-bottom: 1px;
    background-color: #d4d4d4;
    border-bottom: 1px solid #858585;
}
.task-pane .active {
    background-color: #f7f7f7;
}
.task-pane svg {
    width: 18px;
    height: 18px;
}

/* bottom tabs and status bar */
.model-tabs {
    display: flex;
    height: 21px;
    line-height: 20px;
    font-size: 15.5px;
    border-bottom: 1px solid #858585;
}
.nav {
    display: flex;
    width: 83px;
    padding-left: 2px;
    background-color: #a5a8bd;
    border-top: 1px solid #222;
}
.nav svg {
    width: 20px;
    height: 20px;
    fill: #797d9b;
    stroke: #797d9b;
    border: 1px solid #8b8eaa;
}
.model-tabs span {
    width: 60px;
    text-align: center;
    background-color: #d4d4d4;
    border-right: 1px solid #858585;
}
.model-tabs .active {
    padding-left: 5px;
    background-color: #f7f7f7;
    font-size: 17px;
}
.model-tabs .view3d {
    width: 78px;
    letter-spacing: 0.2px;
}
.model-tabs .study {
    width: 134px;
    padding-right: 11px;
    letter-spacing: -0.2px;
}
.status {
    display: flex;
    align-items: center;
    height: 21px;
    padding-left: 1506px;
    background-color: #e6e6e6;
    line-height: 21px;
    white-space: nowrap;
}
.status span {
    padding-top: 3px;
}
.status .defined {
    width: 78px;
    font-size: 15px;
}
.status .editing {
    width: 214px;
    font-size: 15px;
}
.status .units {
    width: 70px;
    font-size: 15px;
}
.status svg {
    width: 17px;
    height: 15px;
    margin-left: 27px;
}

/* windows taskbar */
.taskbar {
    display: flex;
    height: 50px;
    background: linear-gradient(90deg, #14130e, #090300 25%, #0b0603 45%, #151510 60%, #0d0b07);
    color: #fff;
}
.start {
    width: 60px;
    padding: 15px 20px;
}
.start svg {
    width: 20px;
    height: 20px;
}
.search-box {
    display: flex;
    align-items: center;
    width: 430px;
    padding-left: 14px;
    background-color: #f2f2f2;
    border: 1px solid #bbb;
    color: #333;
    font-size: 19px;
}
.search-box svg {
    width: 22px;
    height: 22px;
    margin-right: 13px;
}
.sys {
    display: flex;
    align-items: center;
    justify-content: center;
    width: 60px;
}
.sys svg {
    width: 20px;
    height: 20px;
}
.apps {
    display: flex;
    gap: 11px;
    margin-left: 8px;
}
.task {
    display: flex;
    align-items: center;
    justify-content: center;
    width: 51px;
    border-bottom: 3px solid #76b9ed;
    padding-top: 3px;
}
.task svg {
    width: 30px;
    height: 30px;
}
.task.current {
    width: 61px;
    margin: 0 -5px;
    padding-left: 1px;
    background-color: #3b3735;
    border-right: 4px solid #2a2625;
}
.en {
    font: bold 13px "Open Sans", sans-serif;
    fill: #5b35d5;
}
.sw {
    font: bold 15px "Liberation Sans", sans-serif;
    fill: #fff;
}
.year {
    font: bold 7.5px "Liberation Sans", sans-serif;
    fill: #fff;
}
.word {
    font: bold 13px "Open Sans", sans-serif;
    fill: #fff;
}
.tray {
    display: flex;
    align-items: center;
    margin-left: auto;
}
.tray svg {
    width: 18px;
    height: 18px;
    margin-right: 12px;
}
.lang {
    width: 18px;
    font-size: 18px;
    font-weight: bold;
}
.ime {
    width: 18px;
    height: 19px;
    margin-left: 19px;
    font-size: 15px;
    line-height: 18px;
    text-align: center;
    color: #111;
    background-color: #fff;
}
.clock {
    display: flex;
    flex-direction: column;
    align-items: center;
    width: 121px;
    padding-left: 0;
    padding-right: 1px;
    font-size: 15px;
    line-height: 24px;
}
.tray .notice {
    width: 21px;
    height: 21px;
    margin-right: 24px;
}
.peek {
    width: 6px;
    border-left: 1px solid #555;
}

/* exporter dialog */
.dialog {
    position: absolute;
    left: 168px;
    top: 160px;
    width: 1433px;
    height: 832px;
    background-color: #f0f0f0;
    border: 1px solid #6a6a6a;
    box-shadow: 0 3px 16px rgba(0, 0, 0, 0.45);
    font: 14px/16px "Liberation Mono", monospace;
    letter-spacing: -0.45px;
}
.dialog-title {
    display: flex;
    align-items: center;
    height: 37px;
    padding-left: 11px;
    background-color: #fff;
    letter-spacing: 0;
}
.form-icon {
    width: 17px;
    height: 17px;
    margin-top: -1px;
}
.dialog-title h1 {
    margin: -1px auto 0 6px;
    font: 15.5px/20px "Noto Sans", sans-serif;
    letter-spacing: 0.1px;
}
.ctl {
    width: 14px;
    height: 14px;
    margin-top: -2px;
    margin-right: 44.500px;
}
.ctl:last-child {
    margin-right: 23px;
}
.dialog-body {
    padding: 11px 14px 0 16px;
}
.dialog h2 {
    margin: 0 0 0 3px;
    font: bold 16px/20px "Liberation Sans", sans-serif;
    letter-spacing: 0.3px;
}
.dialog p {
    margin: 9px 0 0 14px;
    letter-spacing: -0.6px;
}
.columns {
    display: flex;
    gap: 43px;
    height: 655px;
    margin-top: 36px;
}
.link-tree {
    display: flex;
    align-items: flex-start;
    width: 600px;
    padding: 3px 12px;
    background-color: #fff;
    border: 1px solid #828790;
}
.link-tree i {
    width: 10px;
    margin: 8px 3px 0 0;
    border-top: 1px dotted #777;
}
.props {
    width: 757px;
    padding-top: 9px;
}
fieldset {
    margin: 0;
    padding: 0;
    border: 1px solid #dcdcdc;
}
legend {
    margin-left: 6px;
    padding: 0 2px;
    font: bold 14px/16px "Liberation Sans", sans-serif;
    letter-spacing: -0.05px;
}
input, .combo {
    display: block;
    margin: 0;
    padding: 0;
    background-color: #fff;
    border: 1px solid #7a7a7a;
    border-radius: 0;
}
.inertial {
    height: 223px;
    font: 14px/16px "Liberation Sans", sans-serif;
    letter-spacing: 0;
}
.inertial legend {
    margin-left: 7px;
}
.headings {
    display: flex;
    padding: 9px 0 0 10px;
}
.headings span:first-child {
    width: 304px;
}
.matrix {
    display: grid;
    grid-template-columns: 58px 87px 54px 87px 77px 87px 41px 87px 50px 87px;
    grid-auto-rows: 23px;
    row-gap: 7px;
    margin-top: 25px;
}
.matrix label {
    padding: 1px 15px 0 0;
    text-align: right;
}
.matrix .low {
    padding: 7px 16px 0 0;
}
.matrix .low:nth-child(n+17) {
    padding-right: 15px;
}
.matrix .mid {
    padding-top: 4px;
}
.mass {
    display: flex;
    align-items: center;
    margin: 36px 0 0 10px;
}
.mass label {
    width: 76px;
    padding-bottom: 4px;
}
.mass input {
    width: 87px;
    height: 23px;
}
.meshes {
    height: 379px;
    margin-top: 24px;
}
.meshes legend {
    margin-left: 3px;
}
.mesh-top {
    display: flex;
    height: 288px;
    padding-top: 22px;
}
.mesh-left {
    width: 478px;
    margin-left: 9px;
}
.pose {
    display: grid;
    grid-template-columns: 45px 87px 55px 87px;
    grid-auto-rows: 25px;
    row-gap: 5px;
    margin-top: 14px;
}
.pose label {
    padding: 1px 15px 0 0;
    text-align: right;
}
.pose .rot {
    padding-right: 7px;
}
.pose .yaw {
    padding-right: 19px;
}
.detail {
    margin-top: 30px;
}
.radios {
    display: flex;
    gap: 40px;
    margin: 14px 0 0 16px;
}
.radios label {
    display: flex;
    align-items: center;
    height: 18px;
}
.radio {
    width: 17px;
    height: 17px;
    margin-right: 3px;
    border: 1px solid #333;
    border-radius: 50%;
    background-color: #fff;
}
.radio.on {
    background: radial-gradient(circle, #333 4.500px, #fff 5.300px);
}
.material {
    margin-top: 21px;
}
.combo {
    display: flex;
    align-items: center;
    justify-content: flex-end;
    width: 160px;
    height: 24px;
    margin: 13px 0 0 11px;
    padding-right: 5px;
}
.combo svg {
    width: 10px;
    height: 8px;
}
.color {
    width: 200px;
}
.channel {
    display: flex;
    margin-top: 5px;
}
.channel label {
    width: 61px;
    padding: 3px 12px 0 0;
    text-align: right;
}
.channel.red {
    margin-top: 15px;
}
.channel.red label {
    padding: 4px 18px 0 0;
}
.channel.green {
    margin-top: 8px;
}
.channel.green label {
    padding-right: 14px;
}
.spin {
    display: flex;
    justify-content: space-between;
    width: 80px;
    height: 25px;
    padding: 1px;
    background-color: #fff;
    border: 1px solid #abadb3;
}
.spin span {
    padding-top: 1px;
}
.spin b {
    display: flex;
    flex-direction: column;
    width: 15px;
    height: 21px;
    border: 1px solid #acacac;
    background: linear-gradient(#eee 9px, #acacac 9px, #acacac 10px, #eee 10px);
}
.spin .caret {
    margin: 3px auto 0;
    border-top-color: #000;
}
.spin .up {
    border-bottom-color: #000;
}
.spin .up + .caret {
    margin-top: 5px;
}
.texture {
    margin: 13px 0 0 9px;
}
.texture-row {
    display: flex;
    margin: 12px 0 0 20px;
}
.texture-row input {
    width: 468px;
    height: 25px;
    margin: 1px 43px 0 0;
}
button {
    width: 98px;
    height: 25px;
    padding: 0;
    font: inherit;
    letter-spacing: inherit;
    color: #000;
    background-color: #e1e1e1;
    border: 1px solid #adadad;
    border-radius: 0;
}
.dialog-footer {
    display: flex;
    margin: 7px 0 0 1px;
}
.dialog-footer .previous {
    margin: 0 auto 0 565px;
}
.dialog-footer .export {
    width: 198px;
    letter-spacing: -0.55px;
}
.dialog-footer .primary {
    margin-left: 9px;
    margin-right: -1px;
    background-color: #e5f1fb;
    border: 1px solid #0078d7;
}

.watermark {
    position: absolute;
    left: 1752px;
    top: 1044px;
    font: 20px/32px "Noto Sans", "Noto Sans CJK SC", sans-serif;
    color: rgba(225, 225, 225, 0.65);
    white-space: nowrap;
    letter-spacing: -0.45px;
}
```
